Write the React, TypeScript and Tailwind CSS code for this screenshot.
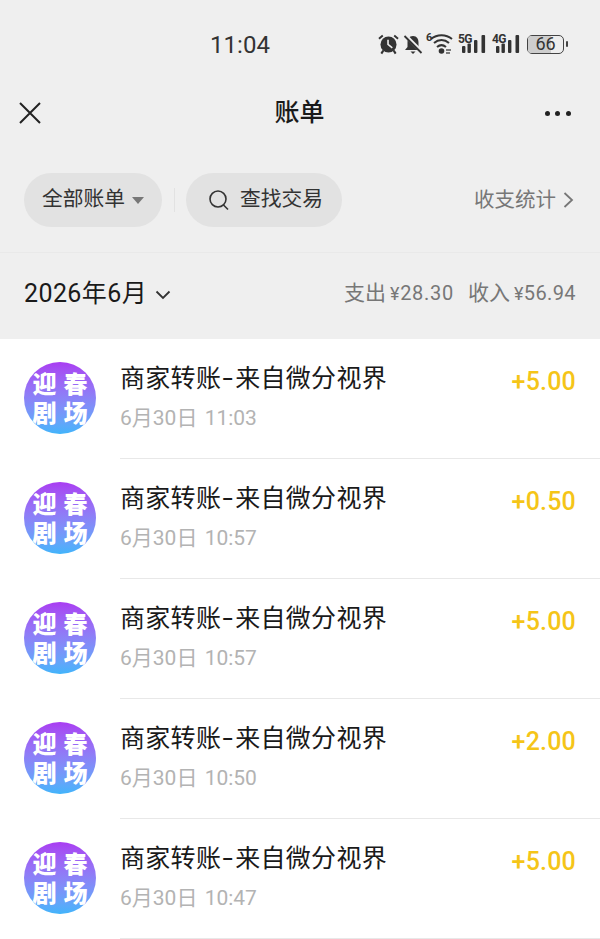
import React from "react";

const cjk = "font-['Roboto','Noto_Sans_CJK_SC',sans-serif]";

function Signal({ label }: { label: string }) {
  return (
    <div className="relative w-[29px] h-[20px]">
      <span className="absolute left-0 top-[-1px] text-[12px] leading-[12px] font-bold text-[#333] tracking-[-0.6px]">{label}</span>
      <svg width="29" height="20" viewBox="0 0 29 20" className="absolute inset-0">
        <rect x="4" y="12" width="3.4" height="7" rx="1" fill="#333" />
        <rect x="9.5" y="9.5" width="3.4" height="9.5" rx="1" fill="#333" />
        <rect x="16" y="6" width="3.4" height="13" rx="1" fill="#333" />
        <rect x="23.5" y="1" width="3.6" height="18" rx="1" fill="#333" />
      </svg>
    </div>
  );
}

function StatusIcons() {
  return (
    <div className="flex items-center absolute left-[378px] top-[33px] h-[22px]">
      <svg width="21" height="22" viewBox="0 0 22 22" className="mr-[4px]">
        <circle cx="11" cy="11.5" r="8.4" fill="#333" />
        <path d="M10.5 6.5V11.5L15 15" stroke="#eee" strokeWidth="1.7" fill="none" />
        <path d="M1 5.5L5 2M21 5.5L17 2" stroke="#333" strokeWidth="2" />
        <path d="M5.5 18L3.5 21M16.5 18L18.5 21" stroke="#333" strokeWidth="2.2" />
      </svg>
      <svg width="20" height="21" viewBox="0 0 20 21" className="mr-[3px]">
        <path d="M10 2C6 2 4.5 5 4.5 8.5V13L2 16H18L15.5 13V8.5C15.5 5 14 2 10 2Z" fill="#333" />
        <path d="M7.5 17.5H12.5L10 20Z" fill="#333" />
        <path d="M2 1L19 18" stroke="#eee" strokeWidth="3.6" />
        <path d="M1.5 2L18.5 19" stroke="#333" strokeWidth="1.8" />
      </svg>
      <div className="relative w-[28px] h-[22px] mr-[4px]">
        <span className="absolute left-0 top-[-1px] text-[11px] leading-[11px] font-bold text-[#333]">6</span>
        <svg width="28" height="22" viewBox="0 0 28 22" className="absolute inset-0">
          <path d="M5 6C11 1 20 1 26 6" stroke="#333" strokeWidth="2" fill="none" />
          <path d="M8 10C12.5 6 18.5 6 23 10" stroke="#333" strokeWidth="2" fill="none" />
          <path d="M11 14C14 11.5 17 11.5 20 14" stroke="#333" strokeWidth="2" fill="none" />
          <circle cx="15.5" cy="18" r="2.8" fill="#333" />
          <path d="M20 17H25M20 20H24" stroke="#555" strokeWidth="1.6" />
        </svg>
      </div>
      <Signal label="5G" />
      <div className="w-[5px]" />
      <Signal label="4G" />
      <div className="w-[6px]" />
      <div className="w-[37px] h-[19px] rounded-[5px] border-[1.5px] border-[#444] relative bg-[#eee] flex items-center justify-center">
        <div className="absolute left-0 top-0 bottom-0 w-[66%] bg-[#cdcdcd] rounded-l-[3px]" />
        <span className="relative text-[18px] leading-[16px] text-[#333] font-['Roboto',sans-serif]">66</span>
      </div>
      <div className="w-[2px] h-[6px] ml-[2px] rounded-[1px] bg-[#444]" />
    </div>
  );
}

const rows = [
  { t: "11:03", a: "+5.00" },
  { t: "10:57", a: "+0.50" },
  { t: "10:57", a: "+5.00" },
  { t: "10:50", a: "+2.00" },
  { t: "10:47", a: "+5.00" },
];

function Avatar() {
  return (
    <div className="w-[72px] h-[72px] rounded-full bg-gradient-to-b from-[#a93cf2] to-[#3fb4fb] shrink-0 flex flex-col items-center pt-[9px] gap-[5px] text-white font-black text-[24px] leading-[24px] font-['Noto_Sans_CJK_SC',sans-serif]">
      <div className="flex gap-[7px] h-[24px]">
        <span className="h-[24px]">迎</span>
        <span className="h-[24px]">春</span>
      </div>
      <div className="flex gap-[7px] h-[24px]">
        <span className="h-[24px]">剧</span>
        <span className="h-[24px]">场</span>
      </div>
    </div>
  );
}

function Row({ t, a }: { t: string; a: string }) {
  return (
    <div className="flex h-[120px] pl-[24px]">
      <div className="pt-[23px] mr-[24px]">
        <Avatar />
      </div>
      <div className="flex-1 flex justify-between border-b border-[#e8e8e8] pr-[24px] pt-[22px]">
        <div>
          <div className="text-[25px] leading-[36px] text-[#1a1a1a] tracking-[0.3px] whitespace-pre">
            商家转账<span className="inline-block w-[14px] text-center scale-x-150">-</span>来自微分视界
          </div>
          <div className="text-[21px] leading-[30px] text-[#b3b3b3] mt-[6px] whitespace-pre [word-spacing:2px]">6月30日 {t}</div>
        </div>
        <div className="text-[25px] leading-[36px] font-medium text-[#f5c518] mt-[3px] tracking-[0.2px]">{a}</div>
      </div>
    </div>
  );
}

export default function App() {
  return (
    <div className={`w-[600px] h-[939px] overflow-hidden bg-white relative ${cjk}`}>
      <div className="bg-[#efefef]">
        <div className="h-[88px] flex justify-center pt-[30px] pr-[120px]">
          <span className="text-[24px] leading-[30px] text-[#333]">11:04</span>
        </div>
        <StatusIcons />
        <div className="h-[50px] grid grid-cols-3 items-center pl-[18px] pr-[29px]">
          <svg width="24" height="24" viewBox="0 0 24 24">
            <path d="M2 2L22 22M22 2L2 22" stroke="#222" strokeWidth="2" fill="none" />
          </svg>
          <span className="text-[25px] font-medium text-[#1a1a1a] text-center relative left-[5px]">账单</span>
          <div className="flex gap-[5.5px] justify-end">
            <span className="w-[5px] h-[5px] rounded-full bg-[#222]" />
            <span className="w-[5px] h-[5px] rounded-full bg-[#222]" />
            <span className="w-[5px] h-[5px] rounded-full bg-[#222]" />
          </div>
        </div>
        <div className="flex items-center mt-[35px] pl-[24px] pr-[26px] h-[54px] mb-[25px]">
          <div className="flex items-center h-[54px] w-[138px] rounded-full bg-[#e2e2e2] pl-[18px]">
            <span className="text-[20.75px] text-[#333]">全部账单</span>
            <span className="ml-[7px] w-0 h-0 border-l-[6px] border-r-[6px] border-t-[7px] border-l-transparent border-r-transparent border-t-[#777]" />
          </div>
          <div className="w-px h-[24px] bg-[#e2e2e2] ml-[12px] mr-[11px]" />
          <div className="flex items-center h-[54px] w-[156px] rounded-full bg-[#e2e2e2] pl-[22px]">
            <svg width="22" height="22" viewBox="0 0 22 22" className="mr-[10px]">
              <circle cx="10" cy="10" r="8" stroke="#333" strokeWidth="1.6" fill="none" />
              <path d="M15.5 16L20 20.5" stroke="#333" strokeWidth="1.6" />
            </svg>
            <span className="text-[20.75px] text-[#333]">查找交易</span>
          </div>
          <div className="flex-1" />
          <span className="text-[20.5px] text-[#777] relative left-[-1px]">收支统计</span>
          <svg width="11" height="18" viewBox="0 0 11 18" className="ml-[6px]">
            <path d="M1.5 2L9 9L1.5 16" stroke="#777" strokeWidth="1.8" fill="none" />
          </svg>
        </div>
        <div className="h-[87px] border-t border-[#e9e9e9] flex items-center justify-between pl-[24px] pr-[24px] pb-[4px]">
          <div className="flex items-center">
            <span className="text-[25px] text-[#1a1a1a] tracking-[0.4px]">2026年6月</span>
            <svg width="16" height="10" viewBox="0 0 16 10" className="ml-[8px] mt-[2px]">
              <path d="M1.5 1.5L8 8L14.5 1.5" stroke="#333" strokeWidth="1.8" fill="none" />
            </svg>
          </div>
          <div className="flex items-baseline text-[21px] text-[#777] whitespace-pre">
            <span>支出</span>
            <span className="ml-[4px] text-[20px] tracking-[0.7px]"><span className="text-[18px]">¥</span>28.30</span>
            <span className="ml-[14px]">收入</span>
            <span className="ml-[4px] text-[20px] tracking-[0.4px]"><span className="text-[18px]">¥</span>56.94</span>
          </div>
        </div>
      </div>
      {rows.map((r, i) => (
        <Row key={i} {...r} />
      ))}
    </div>
  );
}
